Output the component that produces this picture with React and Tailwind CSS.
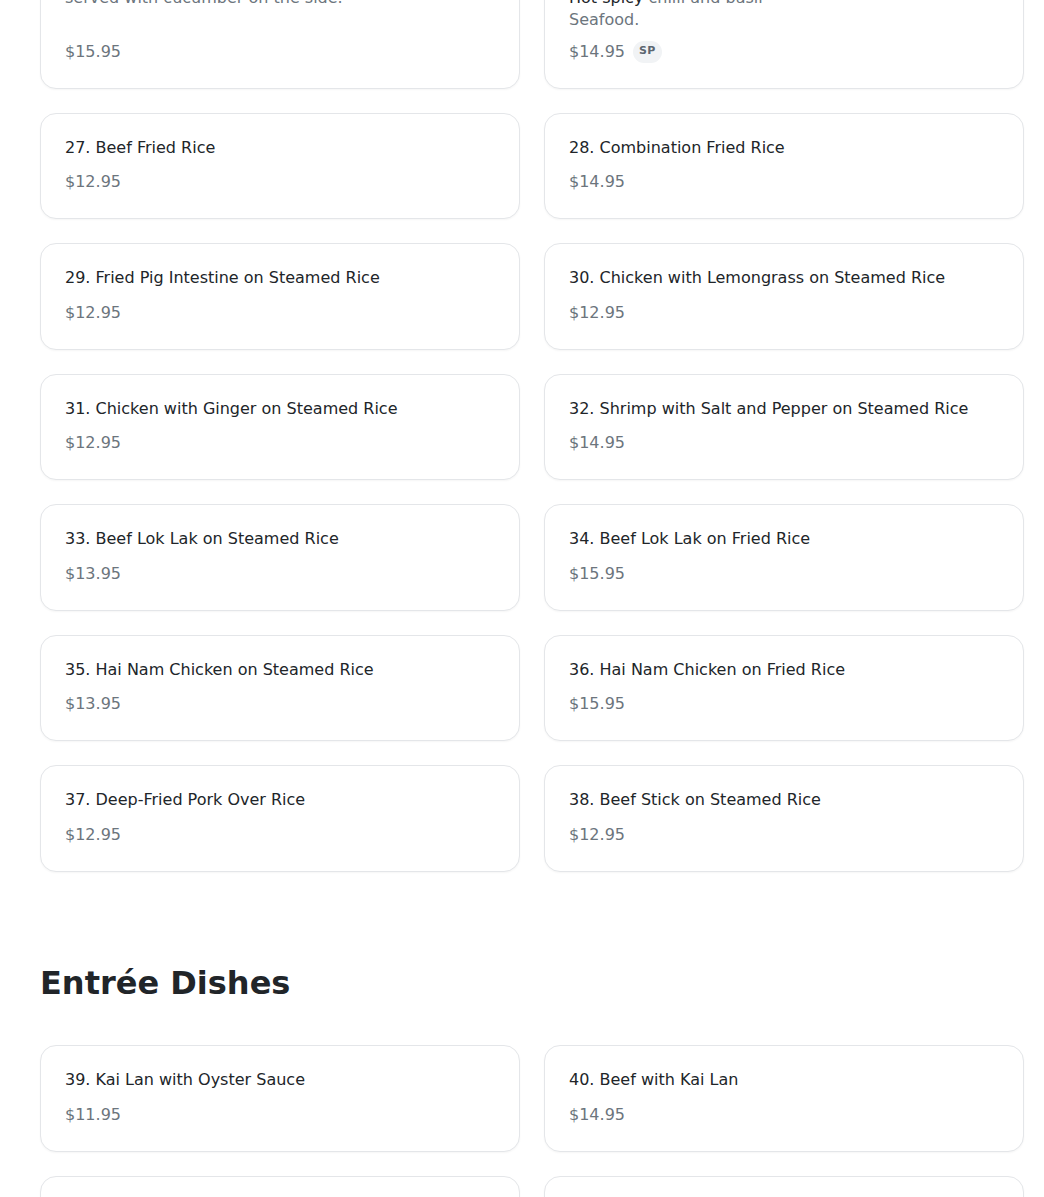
import React from "react";

const ricePlates = [
  {
    no: 25,
    name: "Seafood Fried Rice",
    desc: (
      <>
        <span className="block">Fried rice with prawns, squid, fish cake and egg,</span>
        <span className="block">served with cucumber on the side.</span>
      </>
    ),
    price: "15.95",
  },
  {
    no: 26,
    name: "Spicy Seafood Fried Rice",
    desc: (
      <>
        <span className="block">Wok-fried rice with prawns, squid and fish cake,</span>
        <span className="block">
          <span className="text-[#212529]">Hot spicy</span> chilli and basil
        </span>
        <span className="block">Seafood.</span>
      </>
    ),
    price: "14.95",
    spicy: true,
  },
  { no: 27, name: "Beef Fried Rice", price: "12.95" },
  { no: 28, name: "Combination Fried Rice", price: "14.95" },
  { no: 29, name: "Fried Pig Intestine on Steamed Rice", price: "12.95" },
  { no: 30, name: "Chicken with Lemongrass on Steamed Rice", price: "12.95" },
  { no: 31, name: "Chicken with Ginger on Steamed Rice", price: "12.95" },
  { no: 32, name: "Shrimp with Salt and Pepper on Steamed Rice", price: "14.95" },
  { no: 33, name: "Beef Lok Lak on Steamed Rice", price: "13.95" },
  { no: 34, name: "Beef Lok Lak on Fried Rice", price: "15.95" },
  { no: 35, name: "Hai Nam Chicken on Steamed Rice", price: "13.95" },
  { no: 36, name: "Hai Nam Chicken on Fried Rice", price: "15.95" },
  { no: 37, name: "Deep-Fried Pork Over Rice", price: "12.95" },
  { no: 38, name: "Beef Stick on Steamed Rice", price: "12.95" },
];

const entrees = [
  { no: 39, name: "Kai Lan with Oyster Sauce", price: "11.95" },
  { no: 40, name: "Beef with Kai Lan", price: "14.95" },
  { no: 41, name: "Chicken with Kai Lan", price: "13.95" },
  { no: 42, name: "Shrimp with Kai Lan", price: "15.95" },
];

const MenuCard = ({ item }) => (
  <div className="flex flex-col rounded-2xl border border-[#e4e6e9] bg-white px-6 pt-[22px] pb-6 shadow-[0_1px_2px_rgba(0,0,0,0.04)]">
    <h3 className="text-base leading-6 text-[#212529]">
      {item.no}. {item.name}
    </h3>
    {item.desc && (
      <p className="mt-1 text-base leading-[22px] text-[#6c757d]">{item.desc}</p>
    )}
    <div
      className={`mt-auto flex items-center gap-2 ${
        item.desc ? "pt-[8.5px]" : "pt-[10.5px]"
      }`}
    >
      <span className="text-base leading-6 text-[#6c757d]">${item.price}</span>
      {item.spicy && (
        <span className="flex h-[22px] items-center rounded-full bg-[#f1f3f5] px-1.5 text-[11px] font-bold tracking-wide text-[#5c6670]">
          SP
        </span>
      )}
    </div>
  </div>
);

export default function App() {
  return (
    <div
      className="h-[1197px] overflow-hidden bg-white"
      style={{ fontFamily: '"DejaVu Sans", Verdana, sans-serif' }}
    >
      <div className="pl-10 pr-5">
        {/* Rice plates, scrolled part way */}
        <section className="-mt-[86px] grid grid-cols-2 gap-6">
          {ricePlates.map((item) => (
            <MenuCard key={item.no} item={item} />
          ))}
        </section>

        {/* Entrée dishes */}
        <section>
          <h2 className="mt-[91px] mb-[42.5px] text-[32px] leading-10 font-bold text-[#212529]">
            Entrée Dishes
          </h2>
          <div className="grid grid-cols-2 gap-6">
            {entrees.map((item) => (
              <MenuCard key={item.no} item={item} />
            ))}
          </div>
        </section>
      </div>
    </div>
  );
}
